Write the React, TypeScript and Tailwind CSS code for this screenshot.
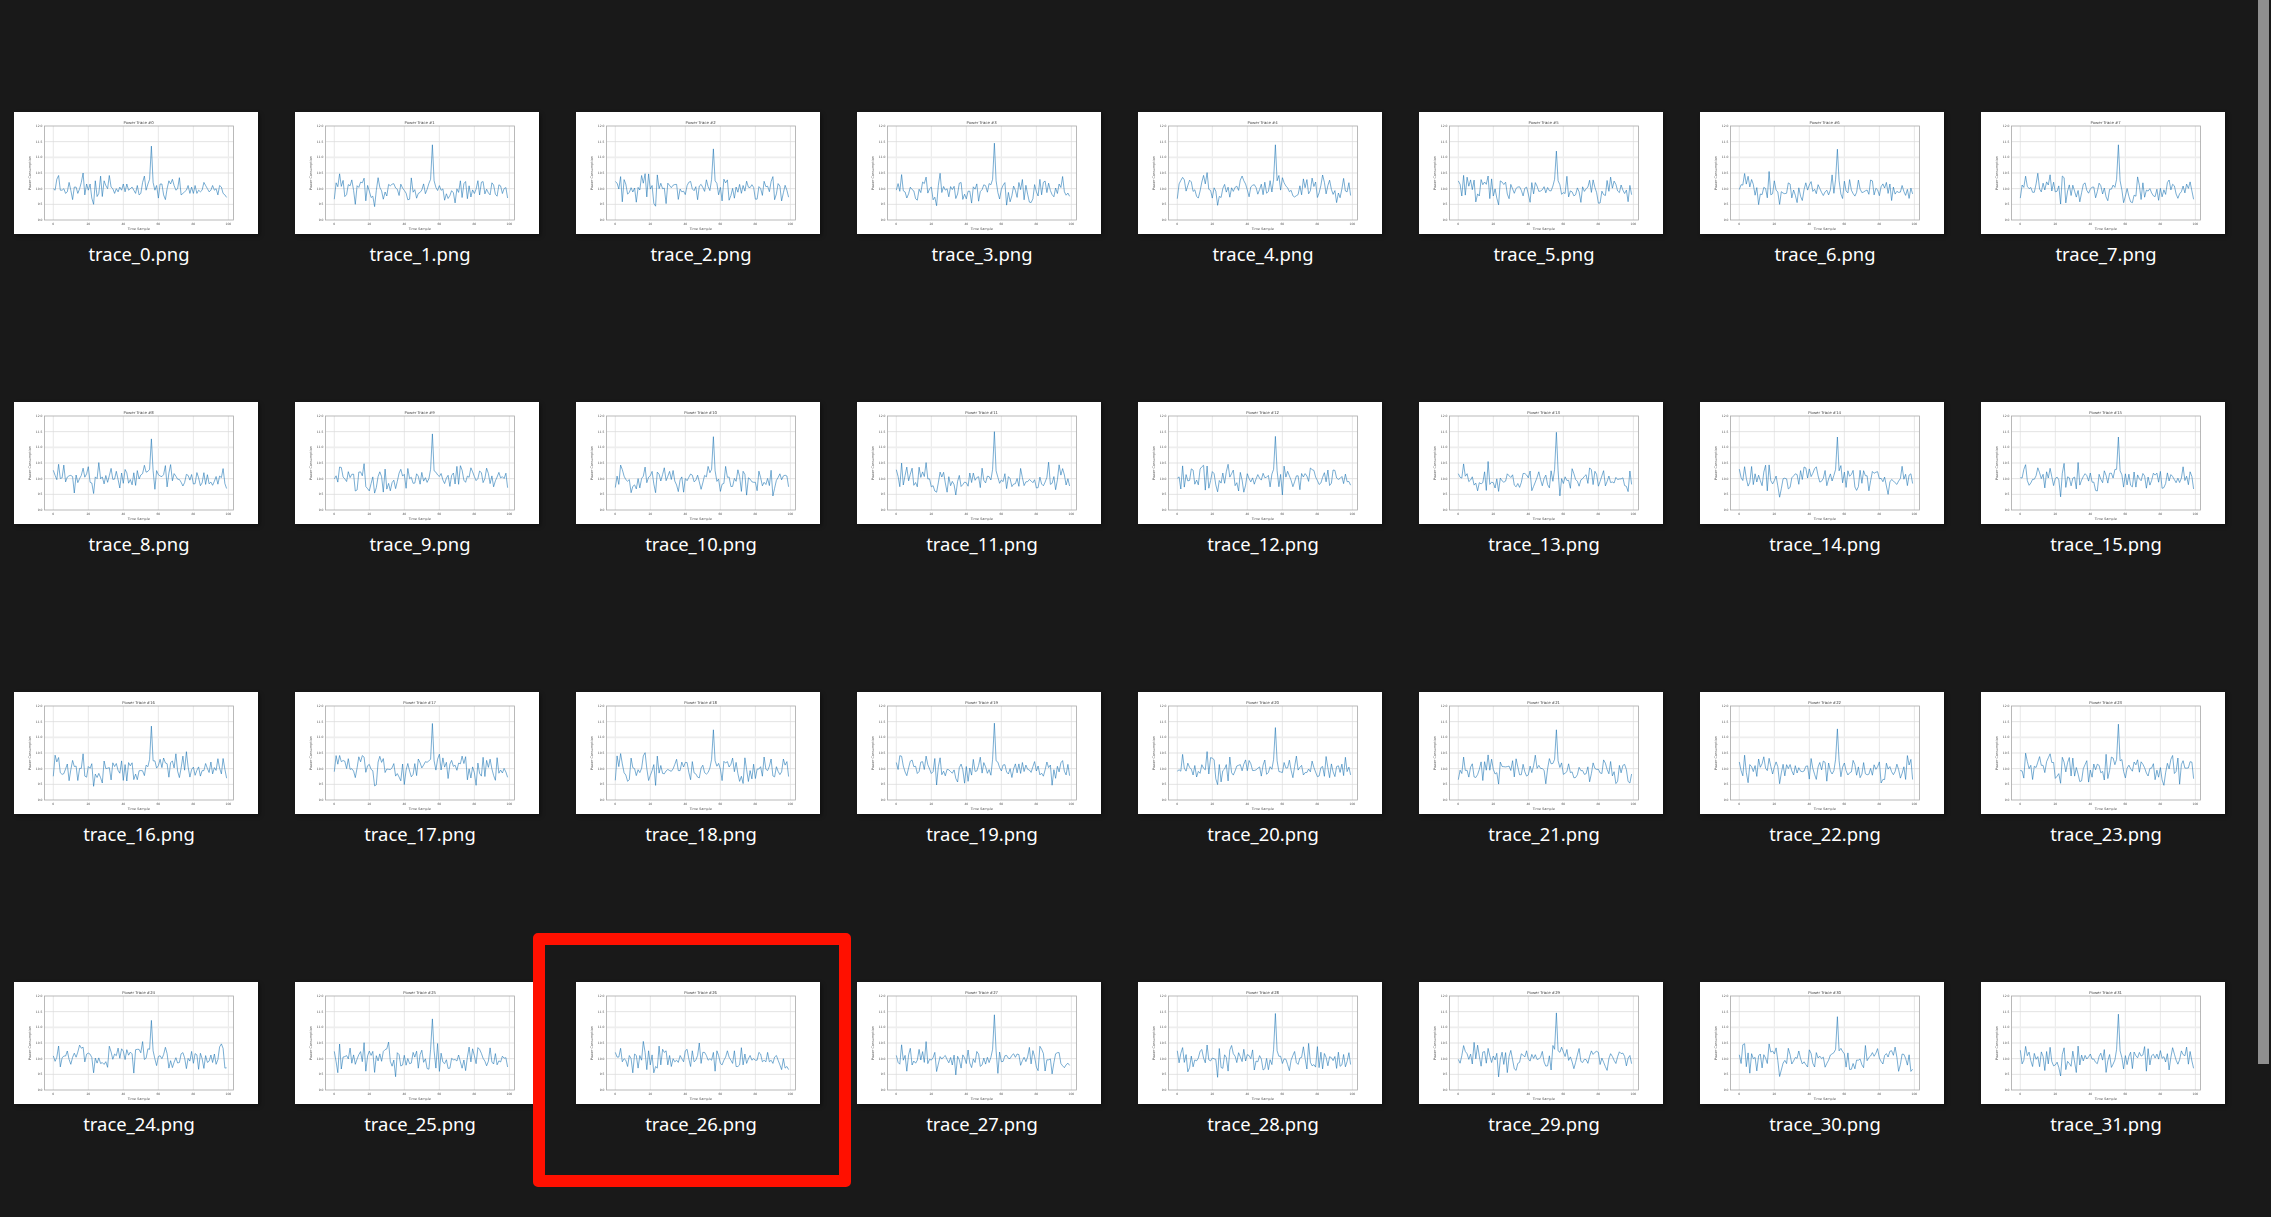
import React from "react";

// peak height of each trace, read off the thumbnails (trace 26 has none)
const peaks = [
  11.36, 11.4, 11.27, 11.45, 11.4, 11.2, 11.26, 11.4, 11.27, 11.43, 11.34, 11.5, 11.35, 11.48, 11.33, 11.33,
  11.36, 11.44, 11.24, 11.45, 11.31, 11.24, 11.27, 11.42, 11.22, 11.27, 0, 11.4, 11.44, 11.46, 11.34, 11.42,
];

const trace0 = [
  10, 9.95, 10.3, 10.42, 9.95, 9.95, 10, 9.85, 9.9, 10.2, 9.95, 9.65, 10.05, 10.05, 9.85, 10, 10.2, 10.5, 9.8, 10.15,
  9.95, 10.15, 9.7, 9.5, 10.25, 9.75, 9.85, 10.4, 9.75, 10.25, 10.1, 10, 10.42, 10.05, 10, 9.85, 10, 9.9, 10.05, 9.95,
  10.15, 9.9, 10.15, 9.95, 10, 10.05, 9.95, 9.85, 10.1, 9.8, 9.85, 10.2, 10.4, 9.95, 10.15, 10.3, 11.36, 10.2, 9.95, 10.1,
  9.7, 10.15, 10.15, 9.8, 9.65, 10, 10.25, 10.15, 10.3, 10.1, 9.95, 10, 10.35, 9.8, 9.85, 9.9, 9.95, 10.1, 9.85, 10.05,
  9.85, 10.1, 9.85, 9.95, 9.9, 9.95, 10.2, 10.1, 10, 9.9, 9.95, 10.1, 9.95, 10, 9.8, 10.1, 10.05, 9.85, 9.8, 9.72,
];

const trace26 = [
  10.2, 10.05, 10.05, 10.33, 9.9, 10, 9.95, 9.75, 10.1, 10, 9.55, 10.15, 10.1, 9.7, 10.1, 9.95, 10.55, 10.2, 9.65, 10.25,
  9.8, 10.12, 9.55, 9.75, 9.7, 10.4, 9.8, 10.3, 10.2, 10.25, 9.8, 10.1, 9.75, 10, 9.9, 9.95, 9.88, 10.1, 10, 9.9,
  10.25, 10.3, 10, 9.75, 10.25, 9.9, 9.95, 10.1, 10.5, 9.85, 10.2, 10.2, 10.1, 9.95, 10, 9.95, 10.2, 9.6, 10.25, 10.1,
  9.85, 9.8, 9.95, 10.05, 10.25, 10.05, 9.95, 9.85, 10.25, 9.75, 9.75, 9.8, 10.35, 9.8, 10.15, 9.85, 10, 10.1, 9.95, 10,
  9.95, 9.95, 10.2, 10.15, 9.9, 9.95, 9.9, 10.2, 9.9, 9.95, 9.85, 10.05, 10.1, 9.95, 9.8, 9.65, 10, 9.7, 9.75, 9.65,
];

function makeTrace(i: number) {
  if (i === 0) return trace0;
  if (i === 26) return trace26;
  let seed = (i + 1) * 7919;
  const rand = () => {
    seed = (seed * 16807) % 2147483647;
    return seed / 2147483647;
  };
  const values: number[] = [];
  for (let n = 0; n < 100; n++) {
    const noise = rand() + rand() + rand() - 1.5;
    let v = 10 + noise * 0.42;
    if (n === 3) v = 10.35 + rand() * 0.15;
    if (n === 17) v = 10.3 + rand() * 0.25;
    if (n === 23) v = 9.4 + rand() * 0.2;
    if (n === 55) v = 10.3;
    if (n === 56) v = peaks[i];
    if (n === 57) v = 10.25;
    if (n === 99) v = 9.65 + rand() * 0.2;
    values.push(v);
  }
  return values;
}

const plot = { left: 30.5, right: 219.5, top: 14, bottom: 108 };
const xAt = (n: number) => 39.3 + n * 1.751;
const yAt = (v: number) => plot.top + (12 - v) * ((plot.bottom - plot.top) / 3);

const Chart = ({ index }: { index: number }) => {
  const data = makeTrace(index);
  const points = data.map((v, n) => `${xAt(n).toFixed(1)},${yAt(v).toFixed(1)}`).join(" ");
  return (
    <svg width="244" height="122" viewBox="0 0 244 122" className="block blur-[0.3px]">
      {/* grid */}
      {[0, 20, 40, 60, 80, 100].map((t) => (
        <line key={t} x1={xAt(t)} x2={xAt(t)} y1={plot.top} y2={plot.bottom} stroke="#dedede" strokeWidth="0.7" />
      ))}
      {[11.5, 10.5, 10, 9.5].map((t) => (
        <line key={t} x1={plot.left} x2={plot.right} y1={yAt(t)} y2={yAt(t)} stroke="#dcdcdc" strokeWidth="0.8" />
      ))}
      <line x1={plot.left} x2={plot.right} y1={yAt(11)} y2={yAt(11)} stroke="#eeeeee" strokeWidth="1.6" />
      <rect
        x={plot.left}
        y={plot.top}
        width={plot.right - plot.left}
        height={plot.bottom - plot.top}
        fill="none"
        stroke="#a8a8a8"
        strokeWidth="0.8"
      />

      {/* trace */}
      <polyline points={points} fill="none" stroke="#1f77b4" strokeOpacity="0.7" strokeWidth="0.85" strokeLinejoin="round" />

      {/* labels */}
      <g fontFamily="'DejaVu Sans', sans-serif" fill="#555555">
        <text x="124.7" y="12.2" fontSize="3.9" textAnchor="middle" fill="#444444">
          Power Trace #{index}
        </text>
        <text x="124.7" y="118" fontSize="3.4" textAnchor="middle">
          Time Sample
        </text>
        <text x="17" y="61" fontSize="3.4" textAnchor="middle" transform="rotate(-90 17 61)">
          Power Consumption
        </text>
        {[0, 20, 40, 60, 80, 100].map((t) => (
          <text key={t} x={xAt(t)} y="113.4" fontSize="3" textAnchor="middle">
            {t}
          </text>
        ))}
        {[12, 11.5, 11, 10.5, 10, 9.5, 9].map((t) => (
          <text key={t} x="28.5" y={yAt(t) + 1.1} fontSize="3" textAnchor="end">
            {t.toFixed(1)}
          </text>
        ))}
      </g>
    </svg>
  );
};

const Thumb = ({ index }: { index: number }) => (
  <div className="relative flex flex-col items-center h-[290px]">
    <div className="w-[244px] h-[122px] bg-white shadow-[2px_2px_4px_rgba(0,0,0,0.35)]">
      <Chart index={index} />
    </div>
    <p className="mt-[6px] pl-[6px] text-[18.4px] leading-[28px] text-white font-['Noto_Sans',sans-serif]">
      trace_{index}.png
    </p>

    {/* red annotation box */}
    {index === 26 && (
      <div className="absolute left-[-43px] top-[-49px] w-[318px] h-[254px] border-[12px] border-[#ff1000] rounded-[5px]" />
    )}
  </div>
);

export default function App() {
  return (
    <div className="flex w-full h-screen overflow-hidden bg-[#191919]">
      <div className="flex-1 pl-[14px] pt-[112px]">
        <div className="grid grid-cols-[repeat(8,244px)] gap-x-[37px]">
          {peaks.map((_, i) => (
            <Thumb key={i} index={i} />
          ))}
        </div>
      </div>
      <div className="w-[11px] h-[1064px] mr-[2px] bg-[#8f8f8f]" />
    </div>
  );
}
